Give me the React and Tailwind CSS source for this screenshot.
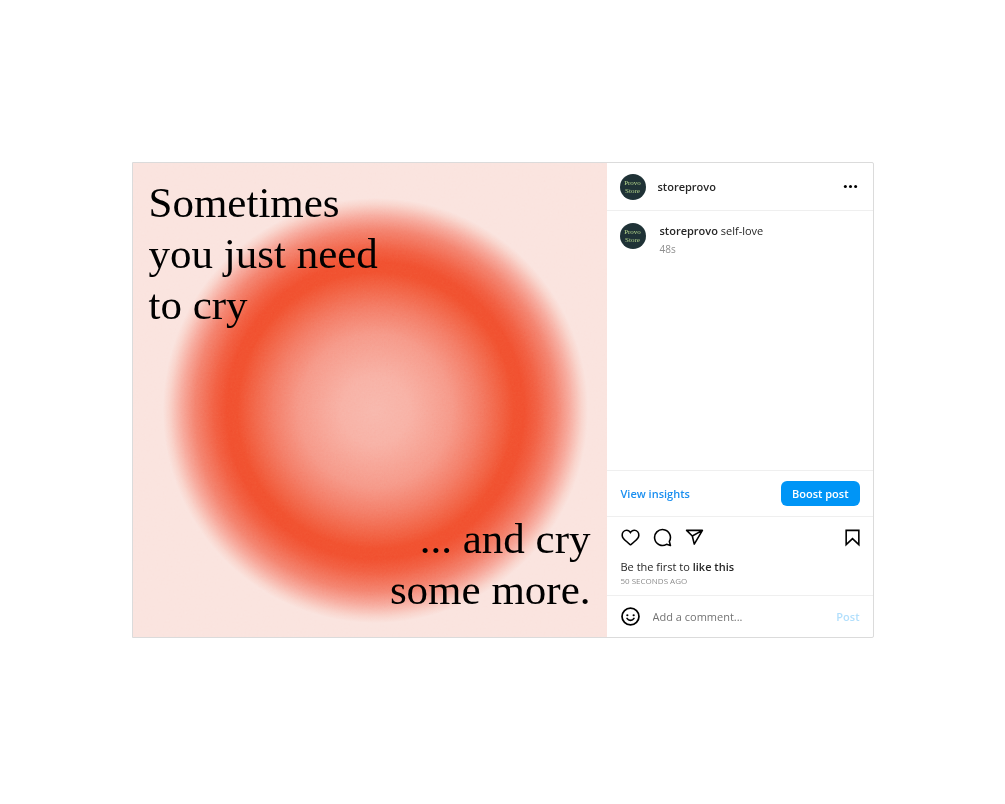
import { useState } from 'react'

function Avatar() {
  return (
    <div className="size-[26px] shrink-0 rounded-full bg-[#1f3236] text-[#b5d68c] font-['Liberation_Serif',serif] text-[7px] leading-[8px] flex flex-col items-center justify-center">
      <span>Provo</span>
      <span>Store</span>
    </div>
  )
}

function IconButton({ label, children, ...props }) {
  return (
    <button aria-label={label} className="shrink-0 text-black hover:opacity-60 transition-opacity" {...props}>
      <svg viewBox="0 0 24 24" className="size-[19px]" fill="none" stroke="currentColor" strokeWidth="2" strokeLinejoin="round">
        {children}
      </svg>
    </button>
  )
}

function Artwork() {
  return (
    <svg viewBox="0 0 475 475" className="absolute inset-0 size-full" aria-hidden="true">
      <defs>
        <radialGradient id="ring" cx="50%" cy="50%" r="50%">
          <stop offset="0" stopColor="#f8b9ae" />
          <stop offset="0.16" stopColor="#f8b3a7" />
          <stop offset="0.36" stopColor="#f69b8b" />
          <stop offset="0.48" stopColor="#f4806a" />
          <stop offset="0.58" stopColor="#f26648" />
          <stop offset="0.65" stopColor="#f15331" />
          <stop offset="0.7" stopColor="#f15231" />
          <stop offset="0.76" stopColor="#f26245" />
          <stop offset="0.85" stopColor="#f48672" />
          <stop offset="0.91" stopColor="#f7aa9d" />
          <stop offset="0.97" stopColor="#f9d5cd" />
          <stop offset="1" stopColor="#fae4df" />
        </radialGradient>
        <filter id="grain" colorInterpolationFilters="sRGB">
          <feTurbulence type="fractalNoise" baseFrequency="0.5" numOctaves="2" />
          <feColorMatrix type="saturate" values="0" />
        </filter>
      </defs>
      <rect width="475" height="475" fill="#fae4df" />
      <circle cx="243" cy="248" r="213" fill="url(#ring)" />
      <rect width="475" height="475" filter="url(#grain)" className="mix-blend-soft-light opacity-20" />
    </svg>
  )
}

function Poster() {
  return (
    <div className="relative w-full sm:flex-1 aspect-square bg-[#fae4df]">
      <Artwork />
      <div className="relative h-full flex flex-col justify-between px-4 pt-[14px] pb-[22px] font-['Liberation_Serif',serif] text-[43px] leading-[51px] text-black">
        <p>
          Sometimes<br />
          you just need<br />
          to cry
        </p>
        <p className="text-right">
          ... and cry<br />
          some more.
        </p>
      </div>
    </div>
  )
}

function CommentForm() {
  const [text, setText] = useState('')

  return (
    <form className="h-[42px] flex items-center gap-[13px] pl-[14px] pr-[13px] border-t border-[#efefef]" onSubmit={e => e.preventDefault()}>
      <IconButton label="Emoji" type="button">
        <circle cx="12" cy="12" r="10.7" strokeWidth="2.2" />
        <circle cx="8" cy="10.4" r="1.4" fill="currentColor" stroke="none" />
        <circle cx="16" cy="10.4" r="1.4" fill="currentColor" stroke="none" />
        <path d="M7.600 14.300c1 1.700 2.500 2.600 4.400 2.600s3.400-.9 4.400-2.600" strokeLinecap="round" />
      </IconButton>
      <input
        value={text}
        onChange={e => setText(e.target.value)}
        aria-label="Add a comment"
        placeholder="Add a comment..."
        className="min-w-0 flex-1 focus:outline-none placeholder-[#737373]"
      />
      <button disabled={!text} className="font-semibold text-[#0095f6] disabled:text-[#b2dffc]">Post</button>
    </form>
  )
}

export default function App() {
  return (
    <main className="min-h-screen flex items-center justify-center pb-1 bg-white font-['Open_Sans',sans-serif] text-[11px] leading-4 text-[#262626]">
      <article className="w-full max-w-[742px] flex flex-col sm:flex-row border border-[#dbdbdb] rounded-r-xs">
        <Poster />
        <section className="w-full sm:w-[266px] flex flex-col">
          <header className="h-12 flex items-center gap-3 px-[13px] border-b border-[#efefef]">
            <Avatar />
            <a href="#storeprovo" className="flex-1 font-semibold">storeprovo</a>
            <IconButton label="More options">
              <g fill="currentColor" stroke="none">
                <circle cx="5.500" cy="12" r="1.900" />
                <circle cx="12" cy="12" r="1.900" />
                <circle cx="18.500" cy="12" r="1.900" />
              </g>
            </IconButton>
          </header>

          <div className="flex-1 flex items-start gap-[14px] px-[13px] py-3">
            <Avatar />
            <div>
              <p><a href="#storeprovo" className="font-semibold">storeprovo</a> self-love</p>
              <p className="mt-[2px] text-[10px] leading-4 text-[#8e8e8e]">48s</p>
            </div>
          </div>

          <div className="h-[46px] flex items-center justify-between pl-[14px] pr-[13px] border-t border-[#efefef]">
            <a href="#insights" className="font-semibold text-[#1a8ff0]">View insights</a>
            <button className="h-[25px] px-[11px] rounded-md bg-[#0095f6] font-semibold text-white">Boost post</button>
          </div>

          <div className="h-[79px] pl-[14px] pr-[13px] pt-[11px] border-t border-[#efefef]">
            <div className="flex items-center gap-[13px]">
              <IconButton label="Like">
                <path
                  fill="currentColor"
                  stroke="none"
                  d="M16.792 3.904A4.989 4.989 0 0 1 21.5 9.122c0 3.072-2.652 4.959-5.197 7.222-2.512 2.243-3.865 3.469-4.303 3.752-.477-.309-2.143-1.823-4.303-3.752C5.141 14.072 2.5 12.167 2.5 9.122a4.989 4.989 0 0 1 4.708-5.218 4.21 4.21 0 0 1 3.675 1.941c.84 1.175.98 1.763 1.12 1.763s.278-.588 1.11-1.766a4.17 4.17 0 0 1 3.679-1.938m0-2a6.04 6.04 0 0 0-4.797 2.127 6.052 6.052 0 0 0-4.787-2.127A6.985 6.985 0 0 0 .5 9.122c0 3.61 2.55 5.827 5.015 7.97.283.246.569.494.853.747l1.027.918a44.998 44.998 0 0 0 3.518 3.018 2 2 0 0 0 2.174 0 45.263 45.263 0 0 0 3.626-3.115l.922-.824c.293-.26.59-.519.885-.774 2.334-2.025 4.98-4.32 4.98-7.94a6.985 6.985 0 0 0-6.708-7.218Z"
                />
              </IconButton>
              <IconButton label="Comment">
                <path d="M20.656 17.008a9.993 9.993 0 1 0-3.590 3.615L22 22Z" />
              </IconButton>
              <IconButton label="Share">
                <path d="M22 3 9.218 10.083M11.698 20.334 22 3H2l7.218 7.084 2.480 10.250Z" />
              </IconButton>
              <div className="ml-auto -mr-[2px] flex">
                <IconButton label="Save">
                  <path d="M20 21 12 13.440 4 21V3h16Z" strokeLinejoin="miter" />
                </IconButton>
              </div>
            </div>
            <p className="mt-3">Be the first to <button className="font-semibold">like this</button></p>
            <p className="text-[8px] leading-3 uppercase text-[#8e8e8e]">50 seconds ago</p>
          </div>

          <CommentForm />
        </section>
      </article>
    </main>
  )
}
